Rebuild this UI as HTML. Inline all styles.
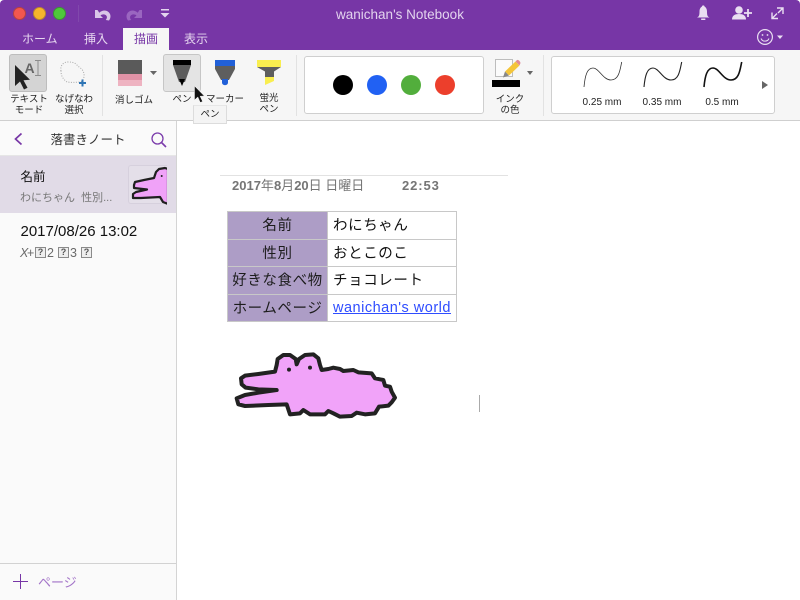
<!DOCTYPE html>
<html><head><meta charset="utf-8">
<style>
html,body{margin:0;padding:0;background:#fff;}
#r{position:relative;width:800px;height:600px;overflow:hidden;background:#fff;font-family:"Liberation Sans","Noto Sans CJK JP",sans-serif;}
.a{position:absolute;white-space:nowrap;}
.c{text-align:center;}
.rb{font-size:9.5px;line-height:11px;color:#222;}
.tab{font-size:12px;line-height:16px;color:#e6d6ef;top:31px;}
td{border:1px solid #c8c8c8;padding:0;height:26.5px;font-size:14.5px;letter-spacing:.6px;color:#111;white-space:nowrap;}
td.h{background:#ad9dc6;text-align:center;width:99px;color:#1c1c1c;}
td.v{padding-left:5px;width:123px;}
td span.u{position:relative;top:-1px;}
table{border-collapse:collapse;position:absolute;left:227px;top:211px;}
.q{position:absolute;top:247px;width:11px;height:11px;box-sizing:border-box;border:1px solid #8a8a8a;background:#eee;font-size:9px;line-height:9px;font-weight:bold;text-align:center;color:#555;}
.t2{position:absolute;top:245px;font-size:12.5px;line-height:16px;color:#6a6a6a;}
</style></head><body><div id="r">

<!-- title bar -->
<div class="a" style="left:0;top:0;width:800px;height:50px;background:#7736a6;border-radius:4px 4px 0 0;"></div>
<div class="a" style="left:13px;top:7px;width:13px;height:13px;box-sizing:border-box;border-radius:50%;background:#f2574f;border:1px solid #b5433f;"></div>
<div class="a" style="left:33px;top:7px;width:13px;height:13px;box-sizing:border-box;border-radius:50%;background:#f7b52c;border:1px solid #bc8a2e;"></div>
<div class="a" style="left:53px;top:7px;width:13px;height:13px;box-sizing:border-box;border-radius:50%;background:#4fc83b;border:1px solid #3d9533;"></div>
<div class="a" style="left:78px;top:5px;width:1px;height:17px;background:#8148ac;"></div>
<svg class="a" style="left:93px;top:6px" width="80" height="16" viewBox="0 0 80 16">
<path d="M2 4v8h8L7.500 9.500C9 8 11.500 8 13 9.300C14.500 10.800 14 12.500 12.800 14L16 14.500C18.300 11.500 17.800 8 15.500 6C13 3.800 9 4 6.300 6.800L4.500 4Z" fill="#d9c6e8"/>
<path d="M49 4v8h-8L43.500 9.500C42 8 39.500 8 38 9.300C36.500 10.800 37 12.500 38.200 14L35 14.500C32.700 11.500 33.200 8 35.500 6C38 3.800 42 4 44.700 6.800L46.500 4Z" fill="#9a66c0"/>
<rect x="68" y="3" width="8" height="1.500" fill="#e4d4ee"/><path d="M67.500 7h9l-4.500 4.500z" fill="#e4d4ee"/>
</svg>
<div class="a c" style="left:250px;top:7px;width:300px;font-size:13.500px;line-height:16px;color:#e3d3ee;">wanichan's Notebook</div>

<svg class="a" style="left:690px;top:0" width="110" height="50" viewBox="0 0 110 50">
<path d="M7 17.500c2-1 2.500-2 2.500-6c0-3 1.500-4.500 2.500-5c0-1.500 2.500-1.500 2.500 0c1 .5 2.500 2 2.500 5c0 4 .5 5 2.500 6z" fill="#eadff2"/>
<rect x="11" y="18.500" width="4.500" height="1.500" rx=".7" fill="#eadff2"/>
<circle cx="49" cy="10" r="3.800" fill="#eadff2"/><path d="M42 19.500c0-4 3-5.500 7-5.500s7 1.500 7 5.500z" fill="#eadff2"/>
<path d="M54 13h8M58 9v8" stroke="#eadff2" stroke-width="1.800"/>
<path d="M93 8l-5 5M82 18.500l5-5M82 12.500v6h6M87 8h6v6" fill="none" stroke="#eadff2" stroke-width="1.400"/>
<circle cx="75" cy="37" r="7.400" fill="none" stroke="#eadff2" stroke-width="1.200"/>
<circle cx="72.500" cy="35" r=".9" fill="#eadff2"/><circle cx="77.500" cy="35" r=".9" fill="#eadff2"/>
<path d="M71 38.500c1.500 3.500 6.500 3.500 8 0" fill="none" stroke="#eadff2" stroke-width="1"/>
<path d="M87 35.500h6l-3 3.500z" fill="#eadff2"/>
</svg>

<!-- tabs -->
<div class="a tab" style="left:22px;">ホーム</div>
<div class="a tab" style="left:84px;">挿入</div>
<div class="a" style="left:123px;top:28px;width:46px;height:22px;background:#f6f6f6;"></div>
<div class="a tab" style="left:134px;color:#7736a6;">描画</div>
<div class="a tab" style="left:184px;">表示</div>

<!-- ribbon -->
<div class="a" style="left:0;top:50px;width:800px;height:70px;background:#f6f6f6;border-bottom:1px solid #cfcfcf;"></div>
<div class="a" style="left:102px;top:55px;width:1px;height:61px;background:#e2e2e2;"></div>
<div class="a" style="left:296px;top:55px;width:1px;height:61px;background:#e2e2e2;"></div>
<div class="a" style="left:543px;top:55px;width:1px;height:61px;background:#e2e2e2;"></div>

<div class="a" style="left:9px;top:54px;width:36px;height:36px;background:#d4d4d4;border:1px solid #bdbdbd;border-radius:3px;"></div>
<svg class="a" style="left:9px;top:54px" width="40" height="38" viewBox="0 0 40 38">
<path d="M6 11l0 21l5-4.500l4 8l3.500-1.800l-4-7.500l6.500-.5z" fill="#222"/>
<text x="15.500" y="19" font-family="Liberation Sans" font-size="14" font-weight="bold" fill="#666">A</text>
<path d="M26 6.500h6M29 6.500v15M26 21.500h6" stroke="#8c8c8c" stroke-width="1" fill="none"/>
</svg>
<svg class="a" style="left:56px;top:56px" width="36" height="36" viewBox="0 0 36 36">
<path d="M5 15c-1-5 2-9 7-9c5 0 7 1 9 3c2 3 6 3 7 9c.5 3-1 8-4 8c-5 .5-10 .5-13 0c-4-3-6-6-6-11z" fill="none" stroke="#a8a8a8" stroke-width="1" stroke-dasharray="1 1.500"/>
<path d="M23 27h7M26.500 23.500v7" stroke="#2f75b5" stroke-width="2"/>
</svg>
<div class="a c rb" style="left:4px;top:94px;width:50px;">テキスト<br>モード</div>
<div class="a c rb" style="left:49px;top:94px;width:50px;">なげなわ<br>選択</div>

<div class="a" style="left:118px;top:60px;width:24px;height:14px;background:#5a5a5a;"></div>
<div class="a" style="left:118px;top:74px;width:24px;height:6px;background:#e092a6;"></div>
<div class="a" style="left:118px;top:80px;width:24px;height:6px;background:#eeb3c1;"></div>
<svg class="a" style="left:149px;top:70px" width="10" height="6"><path d="M1 1h7l-3.500 4z" fill="#666"/></svg>
<div class="a c rb" style="left:109px;top:95px;width:50px;">消しゴム</div>

<div class="a" style="left:163px;top:54px;width:36px;height:36px;background:#e4e4e4;border:1px solid #c6c6c6;border-radius:3px;"></div>
<svg class="a" style="left:170px;top:58px" width="24" height="30" viewBox="0 0 24 30">
<rect x="3" y="2" width="18" height="5" fill="#000"/>
<path d="M3 7h18l-6 17h-6z" fill="#5c5c5c"/>
<path d="M9 21h6l-3 7z" fill="#000"/>
</svg>
<div class="a c rb" style="left:157px;top:94px;width:50px;">ペン</div>

<svg class="a" style="left:212px;top:58px" width="26" height="30" viewBox="0 0 26 30">
<rect x="3" y="2" width="20" height="6" fill="#2160d8"/>
<path d="M3 8h20v3l-6 11h-8l-6-11z" fill="#5e5e5e"/>
<path d="M10 21h6v3.500c0 3.500-6 3.500-6 0z" fill="#2160d8"/>
</svg>
<div class="a c rb" style="left:200px;top:94px;width:50px;">マーカー</div>

<svg class="a" style="left:255px;top:58px" width="28" height="30" viewBox="0 0 28 30">
<path d="M2 2h24v7H2z" fill="#f9ee4f"/>
<path d="M2 9h24l-7 4.500v6H10v-6z" fill="#5e5e5e"/>
<path d="M10 19h9v4l-9 4z" fill="#f9ee4f"/>
</svg>
<div class="a c rb" style="left:244px;top:93px;width:50px;">蛍光<br>ペン</div>

<!-- ink boxes -->
<div class="a" style="left:304px;top:56px;width:178px;height:56px;background:#fff;border:1px solid #cfcfcf;border-radius:3px;"></div>
<div class="a" style="left:333px;top:75px;width:20px;height:20px;border-radius:50%;background:#000;"></div>
<div class="a" style="left:367px;top:75px;width:20px;height:20px;border-radius:50%;background:#2161f3;"></div>
<div class="a" style="left:401px;top:75px;width:20px;height:20px;border-radius:50%;background:#52ae3c;"></div>
<div class="a" style="left:435px;top:75px;width:20px;height:20px;border-radius:50%;background:#ec3f2c;"></div>

<svg class="a" style="left:490px;top:56px" width="50" height="34" viewBox="0 0 50 34">
<rect x="5.500" y="3.500" width="17" height="17" fill="#fbfbfb" stroke="#bdbdbd"/>
<path d="M15 15.500L25.500 5.500L29.500 9.500L19 19.500z" fill="#f4c53a"/>
<path d="M25.500 5.500l1.500-1.500c1-.6 3 1 3.500 3l-1 2.500z" fill="#e08a97"/>
<path d="M15 15.500L13 21.500L19 19.500z" fill="#888"/>
<path d="M37 15h6l-3 4z" fill="#666"/>
<rect x="2" y="24" width="28" height="7" fill="#000"/>
</svg>
<div class="a c rb" style="left:485px;top:94px;width:50px;">インク<br>の色</div>

<div class="a" style="left:551px;top:56px;width:222px;height:56px;background:#fff;border:1px solid #cfcfcf;border-radius:3px;"></div>
<svg class="a" style="left:551px;top:56px" width="224" height="36" viewBox="0 0 224 36">
<path d="M33 31C34 20 36 12 42 12C48 12 52 24 60 24C68 24 69 14 70.700 6" fill="none" stroke="#333" stroke-width=".8"/>
<path d="M93 31C94 20 96 12 102 12C108 12 112 24 120 24C128 24 129 14 130.700 6" fill="none" stroke="#222" stroke-width="1.100"/>
<path d="M153 31C154 20 156 12 162 12C168 12 172 24 180 24C188 24 189 14 190.700 6" fill="none" stroke="#111" stroke-width="1.600"/>
</svg>
<div class="a c" style="left:572px;top:97px;width:60px;font-size:10px;line-height:12px;color:#222;">0.25 mm</div>
<div class="a c" style="left:632px;top:97px;width:60px;font-size:10px;line-height:12px;color:#222;">0.35 mm</div>
<div class="a c" style="left:692px;top:97px;width:60px;font-size:10px;line-height:12px;color:#222;">0.5 mm</div>
<svg class="a" style="left:761px;top:80px" width="9" height="10"><path d="M1 1l6 4l-6 4z" fill="#666"/></svg>

<!-- sidebar -->
<div class="a" style="left:0;top:121px;width:176px;height:479px;background:#fafafa;border-right:1px solid #d4d4d4;"></div>
<div class="a" style="left:0;top:155px;width:176px;height:1px;background:#e6e6e6;"></div>
<svg class="a" style="left:12px;top:131px" width="14" height="16"><path d="M9.500 2.500L3.500 8l6 5.500" fill="none" stroke="#7736a6" stroke-width="1.700"/></svg>
<div class="a c" style="left:38px;top:132px;width:100px;font-size:12.500px;line-height:17px;color:#333;">落書きノート</div>
<svg class="a" style="left:149px;top:131px" width="20" height="18"><circle cx="8.500" cy="7.500" r="5.500" fill="none" stroke="#7b3cab" stroke-width="1.300"/><path d="M12.500 11.500l4.500 4.500" stroke="#7b3cab" stroke-width="1.600"/></svg>

<div class="a" style="left:0;top:156px;width:176px;height:57px;background:#e1dbe7;"></div>
<div class="a" style="left:20.500px;top:168px;font-size:12.500px;line-height:18px;color:#111;">名前</div>
<div class="a" style="left:20px;top:191px;font-size:11px;line-height:15px;color:#777;">わにちゃん&nbsp; 性別...</div>
<div class="a" style="left:128px;top:165px;width:39px;height:39px;box-sizing:border-box;background:#e4dfe9;border:1px solid #d6d0dd;border-right:none;border-radius:3px 0 0 3px;"></div>
<svg class="a" style="left:129px;top:160px" width="38" height="50" viewBox="0 0 38 50">
<path d="M39 9L36 8L30 9L27 12L25 18L15 20L6 22L5 25L5 28L18 29.500L7 32L4 34L4 38L12 38L31 37L34 42L39 44Z" fill="#f0a2f8" stroke="#1f1f1f" stroke-width="2.200" stroke-linejoin="round"/>
<circle cx="32.700" cy="16" r="1" fill="#222"/>
</svg>

<div class="a" style="left:20.500px;top:223px;font-size:15px;line-height:18px;color:#111;">2017/08/26 13:02</div>
<div class="t2" style="left:20px;"><i>X</i></div>
<div class="t2" style="left:27px;">+</div>
<div class="q" style="left:35px;">?</div>
<div class="t2" style="left:47px;">2</div>
<div class="q" style="left:58px;">?</div>
<div class="t2" style="left:70px;">3</div>
<div class="q" style="left:81px;">?</div>

<div class="a" style="left:0;top:563px;width:176px;height:1px;background:#d2d2d2;"></div>
<svg class="a" style="left:12px;top:573px" width="18" height="18"><path d="M1 8.500h15M8.500 1v15" stroke="#7736a6" stroke-width="1"/></svg>
<div class="a" style="left:38px;top:574px;font-size:13px;line-height:17px;color:#a374c8;">ページ</div>

<!-- page -->
<div class="a" style="left:220px;top:175px;width:288px;height:1px;background:#e2e2e2;"></div>
<div class="a" style="left:232px;top:178px;font-size:13px;line-height:16px;color:#757575;"><b>2017</b>年<b>8</b>月<b>20</b>日 日曜日</div>
<div class="a" style="left:402px;top:178px;font-size:13px;line-height:16px;font-weight:bold;letter-spacing:.9px;color:#757575;">22:53</div>

<table>
<tr><td class="h"><span class="u">名前</span></td><td class="v"><span class="u">わにちゃん</span></td></tr>
<tr><td class="h">性別</td><td class="v">おとこのこ</td></tr>
<tr><td class="h"><span class="u">好きな食べ物</span></td><td class="v"><span class="u">チョコレート</span></td></tr>
<tr><td class="h">ホームページ</td><td class="v" style="letter-spacing:.5px;"><span style="color:#2f4dff;text-decoration:underline;">wanichan's world</span></td></tr>
</table>

<svg class="a" style="left:225px;top:345px" width="180" height="75" viewBox="0 0 540 225">
<path d="M155 135L100 133L62 128L50 118L48 100L60 92L100 87L150 80L155 60L158 42L175 30L195 30L212 42L215 58L222 42L240 30L265 28L280 40L285 60L290 75L310 72L325 68L345 72L355 78L385 75L400 82L440 85L450 100L475 105L480 122L495 125L500 140L510 158L500 172L490 182L462 185L450 205L420 208L395 203L380 213L345 215L325 205L310 198L300 208L255 208L235 195L225 205L195 208L185 178L130 180L60 183L40 178L35 160L60 150L100 143Z" fill="#f1a3f9" stroke="#222" stroke-width="12" stroke-linejoin="round"/>
<circle cx="192" cy="74" r="6" fill="#222"/><circle cx="255" cy="68" r="6" fill="#222"/>
</svg>
<div class="a" style="left:479px;top:395px;width:1px;height:17px;background:#aaa;"></div>

<!-- tooltip + cursor -->
<div class="a c" style="left:193px;top:105px;width:34px;height:19px;background:#f4f4f4;border:1px solid #dcdcdc;border-top:1px solid #e6e6e6;box-sizing:border-box;font-size:9.500px;line-height:18px;color:#222;">ペン</div>
<svg class="a" style="left:193px;top:85px" width="14" height="20" viewBox="0 0 14 20"><path d="M1.500 1l0 14l3.300-3l2.500 5.500l2.300-1l-2.500-5.300l4.200-.2z" fill="#111" stroke="#eee" stroke-width=".5"/></svg>

</div></body></html>
